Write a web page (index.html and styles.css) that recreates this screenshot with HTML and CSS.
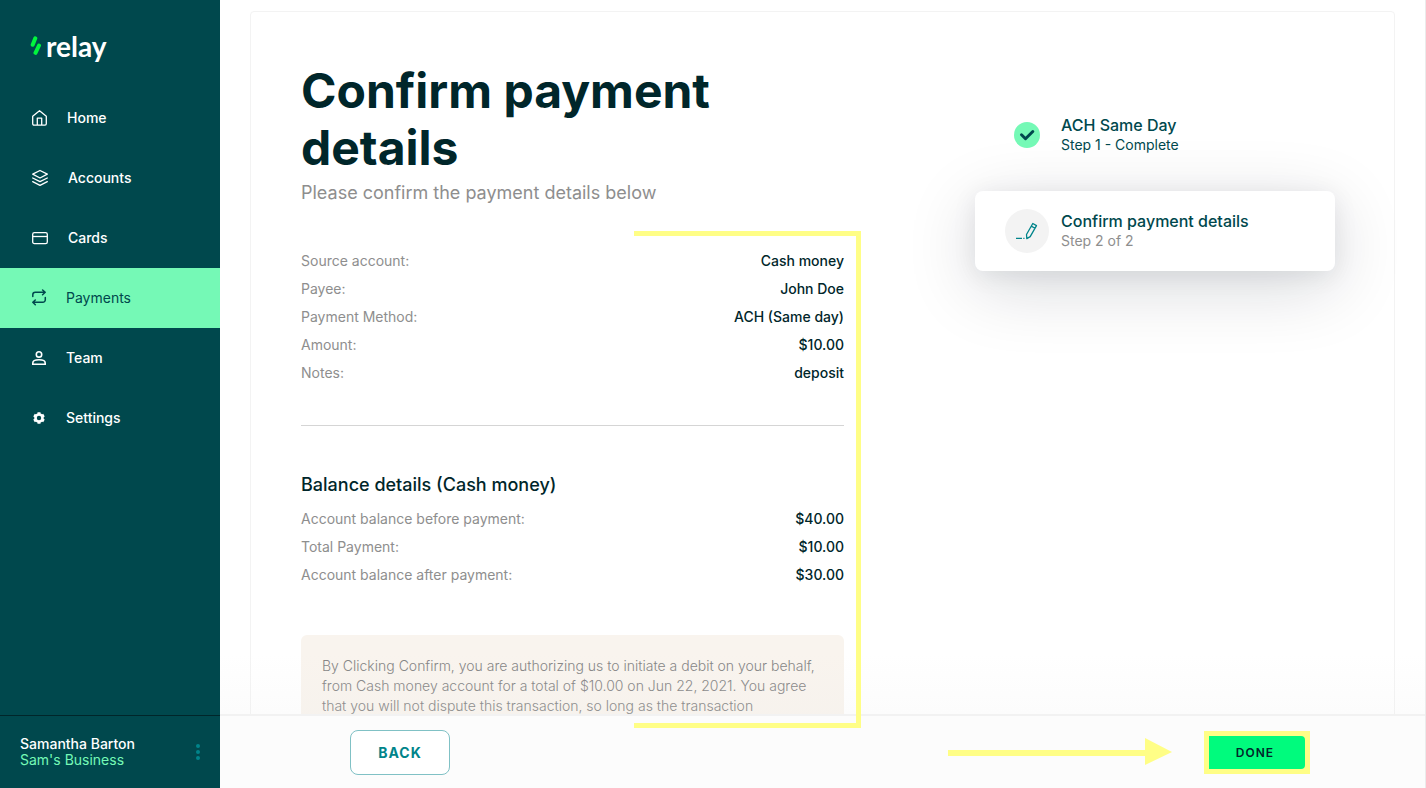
FILE: index.html
```html
<!DOCTYPE html>
<html lang="en">
<head>
<meta charset="utf-8">
<meta name="viewport" content="width=device-width, initial-scale=1">
<title>Relay - Confirm payment details</title>
<link rel="stylesheet" href="styles.css">
</head>
<body>
<div class="app">
  <aside class="sidebar">
    <a class="logo" href="#" aria-label="relay">
      <svg class="logo-mark" width="12" height="20" viewBox="0 0 12 20" fill="none" stroke="#00f53d" stroke-width="4" stroke-linecap="round"><path d="M5.300 2.300 2.700 8.800M9 9.500 5.500 16.800"/></svg>
      <span class="logo-text">relay</span>
    </a>
    <nav class="nav">
      <a class="nav-item" href="#">
        <svg class="icon icon-medium" viewBox="0 0 18 18" fill="none" stroke="currentColor" stroke-width="1.300" stroke-linejoin="round"><path d="M2.200 7.200 9 1.700l6.800 5.500v7.600a1.300 1.300 0 0 1-1.300 1.300h-11a1.300 1.300 0 0 1-1.300-1.300zM6.800 16V9.100h4.400V16"/></svg>
        <span class="nav-label">Home</span></a>
      <a class="nav-item" href="#">
        <svg class="icon icon-large" viewBox="0 0 18 18" fill="none" stroke="currentColor" stroke-width="1.300" stroke-linejoin="round" stroke-linecap="round"><path d="m9 1.500 7.300 3.700L9 9 1.700 5.200zM1.700 9 9 12.700 16.300 9M1.700 12.600 9 16.300l7.300-3.700"/></svg>
        <span class="nav-label">Accounts</span></a>
      <a class="nav-item" href="#">
        <svg class="icon icon-large" viewBox="0 0 18 18" fill="none" stroke="currentColor" stroke-width="1.300"><rect x="1.700" y="3.600" width="14.600" height="11" rx="1.700"/><path d="M1.700 7.500h14.600"/></svg>
        <span class="nav-label">Cards</span></a>
      <a class="nav-item nav-item-active" href="#" aria-current="page">
        <svg class="icon" viewBox="0 0 18 18" fill="none" stroke="currentColor" stroke-width="1.500" stroke-linecap="round" stroke-linejoin="round"><path d="M2.800 7.500V5.800A2.500 2.500 0 0 1 5.300 3.300H15M12.600 1 15.200 3.300l-2.600 2.400M15.300 8.500v2.300a2.500 2.500 0 0 1-2.500 2.500H3M5.300 11 2.800 13.300l2.500 2.400"/></svg>
        <span class="nav-label">Payments</span></a>
      <a class="nav-item" href="#">
        <svg class="icon" viewBox="0 0 18 18" fill="none" stroke="currentColor" stroke-width="1.600"><circle cx="9" cy="5.400" r="2.700"/><path d="M2.800 15.200v-1.300C2.800 11.900 6 10.800 9 10.800s6.200 1.100 6.200 3.100v1.300z"/></svg>
        <span class="nav-label">Team</span></a>
      <a class="nav-item" href="#">
        <svg class="icon" viewBox="0 0 18 18" fill="none" stroke="currentColor"><circle cx="9" cy="9" r="3.500" stroke-width="2.600"/><path stroke-width="3" d="M9 5.500V3.200M9 12.500v2.300M12 7.300l2-1.200M6 10.700l-2 1.200M6 7.300 4 6.100M12 10.700l2 1.200"/></svg>
        <span class="nav-label">Settings</span></a>
    </nav>
    <div class="profile">
      <div class="profile-names">
        <span class="profile-user">Samantha Barton</span>
        <span class="profile-business">Sam's Business</span>
      </div>
      <button class="profile-menu" type="button" aria-label="Account menu">
        <svg width="4" height="16" viewBox="0 0 4 16" fill="currentColor"><circle cx="2" cy="2" r="2"/><circle cx="2" cy="8" r="2"/><circle cx="2" cy="14" r="2"/></svg>
      </button>
    </div>
  </aside>

  <main class="main">
    <div class="content">
      <div class="card">
        <section class="details">
          <h1 class="title">Confirm payment details</h1>
          <p class="subtitle">Please confirm the payment details below</p>
          <dl class="rows">
            <div class="row"><dt>Source account:</dt><dd>Cash money</dd></div>
            <div class="row"><dt>Payee:</dt><dd>John Doe</dd></div>
            <div class="row"><dt>Payment Method:</dt><dd>ACH (Same day)</dd></div>
            <div class="row"><dt>Amount:</dt><dd>$10.00</dd></div>
            <div class="row"><dt>Notes:</dt><dd>deposit</dd></div>
          </dl>
          <hr class="divider">
          <h2 class="section-title">Balance details (Cash money)</h2>
          <dl class="rows">
            <div class="row"><dt>Account balance before payment:</dt><dd>$40.00</dd></div>
            <div class="row"><dt>Total Payment:</dt><dd>$10.00</dd></div>
            <div class="row"><dt>Account balance after payment:</dt><dd>$30.00</dd></div>
          </dl>
          <p class="notice">By Clicking Confirm, you are authorizing us to initiate a debit on your behalf, from Cash money account for a total of $10.00 on Jun 22, 2021. You agree that you will not dispute this transaction, so long as the transaction</p>
        </section>
        <ol class="steps">
          <li class="step">
            <span class="step-icon">
              <svg width="26" height="26" viewBox="0 0 26 26" fill="none"><circle cx="13" cy="13" r="13" fill="#75f9b6"/><path d="m7.500 12.800 4 3.900 7.300-7.200" stroke="#00484d" stroke-width="3" stroke-linecap="round" stroke-linejoin="round"/></svg>
            </span>
            <div class="step-text"><span class="step-name">ACH Same Day</span><span class="step-state">Step 1 - Complete</span></div>
          </li>
          <li class="step step-current" aria-current="step">
            <span class="step-icon step-icon-current">
              <svg width="22" height="18" viewBox="0 0 22 18" fill="none" stroke="#00848a" stroke-width="1.300" stroke-linejoin="round"><path d="M0 16.300h6M7.300 16.300h1.200M16.800 1.500l3.700 2.100-6.300 11-3.400 2-.300-4.100zM15.300 4.100l3.700 2.100"/></svg>
            </span>
            <div class="step-text"><span class="step-name">Confirm payment details</span><span class="step-state step-state-muted">Step 2 of 2</span></div>
          </li>
        </ol>
      </div>
    </div>
    <footer class="actions">
      <button class="back" type="button">BACK</button>
      <div class="finish">
        <svg class="arrow" width="224" height="28" viewBox="0 0 224 28" fill="#fffe86" aria-hidden="true"><path d="M0 12h197V0l27 14-27 13V18H0z"/></svg>
        <span class="done-frame"><button class="done" type="button">DONE</button></span>
      </div>
    </footer>
    <div class="bracket" aria-hidden="true"></div>
  </main>
</div>
</body>
</html>
```
FILE: styles.css
```css
* { box-sizing: border-box; }
body {
  margin: 0;
  font-family: Inter, "Liberation Sans", sans-serif;
  font-size: 14px;
  line-height: 20px;
  color: #00262a;
  background: #fff;
}
h1, h2, p, dl, dd, ol { margin: 0; padding: 0; }
button { font-family: inherit; cursor: pointer; }
a { color: inherit; text-decoration: none; }

.app { display: flex; height: 100vh; overflow: hidden; }

.sidebar {
  display: flex;
  flex-direction: column;
  flex: 0 0 220px;
  background: #00484d;
  color: #fff;
}
.logo { display: flex; align-items: flex-start; gap: 4px; height: 88px; padding: 36px 30px 0; }
.logo-text { font-family: Lato, sans-serif; font-size: 28px; font-weight: 700; line-height: 20px; }
.nav { display: flex; flex-direction: column; flex: 1; }
.nav-item { display: flex; align-items: center; gap: 18px; height: 60px; padding: 0 30px; font-weight: 500; }
.nav-item-active { background: #75f9b6; color: #00484d; font-weight: 400; }
.icon { width: 18px; height: 18px; }
.icon-medium { width: 19px; }
.icon-large { width: 20px; }
.profile {
  display: flex;
  align-items: center;
  justify-content: space-between;
  height: 73px;
  padding: 0 20px;
  border-top: 1px solid #00262a;
}
.profile-names { display: flex; flex-direction: column; line-height: 16px; font-weight: 500; }
.profile-business { color: #75f9b6; font-weight: 400; }
.profile-menu { display: flex; padding: 0; border: 0; background: none; color: #00848a; }

.main {
  position: relative;
  display: flex;
  flex-direction: column;
  flex: 1;
  min-width: 0;
  border-right: 1px solid #ebebeb;
}
.content { position: relative; flex: 1; min-height: 0; padding: 11px 30px 0; overflow: hidden; }
.content::after {
  content: "";
  position: absolute;
  inset: auto 0 0;
  height: 60px;
  background: linear-gradient(rgba(230, 230, 230, 0), rgba(230, 230, 230, 0.12));
}
.card {
  display: flex;
  justify-content: space-between;
  gap: 60px;
  padding: 50px 59px 50px 50px;
  border: 1px solid #f3f3f3;
  border-radius: 4px;
}
.details { flex: 0 1 543px; }
.title { font-size: 48px; line-height: 57px; font-weight: 700; }
.subtitle { margin-top: 5px; font-size: 18px; line-height: 24px; color: #8e8e8e; }
.rows { display: flex; flex-direction: column; }
.subtitle + .rows { margin-top: 42px; }
.row { display: flex; justify-content: space-between; line-height: 28px; }
.row dt { color: #8e8e8e; }
.row dd { font-weight: 500; }
.divider { height: 1px; margin: 38px 0 47px; border: 0; background: #d5d5d5; }
.section-title { margin-bottom: 8px; font-size: 18px; line-height: 24px; font-weight: 500; }
.notice {
  margin-top: 46px;
  padding: 21px;
  border-radius: 6px;
  background: #f9f4ee;
  color: #858585;
  font-weight: 300;
}

.steps { flex: 0 0 360px; padding-top: 33px; list-style: none; }
.step { display: flex; align-items: center; gap: 12px; height: 80px; padding: 0 30px; }
.step-current {
  margin-top: 16px;
  border-radius: 8px;
  background: #fff;
  box-shadow: 0 16px 70px rgba(0, 20, 40, 0.16), 0 4px 24px rgba(0, 20, 40, 0.08);
}
.step-icon { display: flex; align-items: center; justify-content: center; flex: 0 0 44px; height: 44px; }
.step-icon-current { border-radius: 50%; background: #f3f3f3; }
.step-text { display: flex; flex-direction: column; color: #00484d; }
.step-name { font-size: 16px; font-weight: 500; }
.step-state-muted { color: #8e8e8e; }

.actions {
  display: flex;
  align-items: center;
  justify-content: space-between;
  height: 74px;
  padding: 0 115px 0 130px;
  border-top: 2px solid #f2f2f2;
  background: #fcfcfc;
}
.back {
  width: 100px;
  height: 45px;
  border: 1px solid #80c1c5;
  border-radius: 8px;
  background: #fff;
  color: #00848a;
  font-size: 14px;
  font-weight: 700;
  letter-spacing: 1px;
}
.finish { display: flex; align-items: center; gap: 32px; }
.done-frame { display: flex; padding: 5px; background: #fffe86; }
.done {
  width: 96px;
  height: 33px;
  padding: 0 4px 0 0;
  border: 0;
  border-radius: 0 4px 4px 0;
  background: #00fb7d;
  color: #00262a;
  font-size: 12px;
  font-weight: 600;
  letter-spacing: 1px;
}
.bracket {
  position: absolute;
  top: 231px;
  bottom: 60px;
  left: 414px;
  width: 227px;
  border: 5px solid #fffe86;
  border-left: 0;
}
```
